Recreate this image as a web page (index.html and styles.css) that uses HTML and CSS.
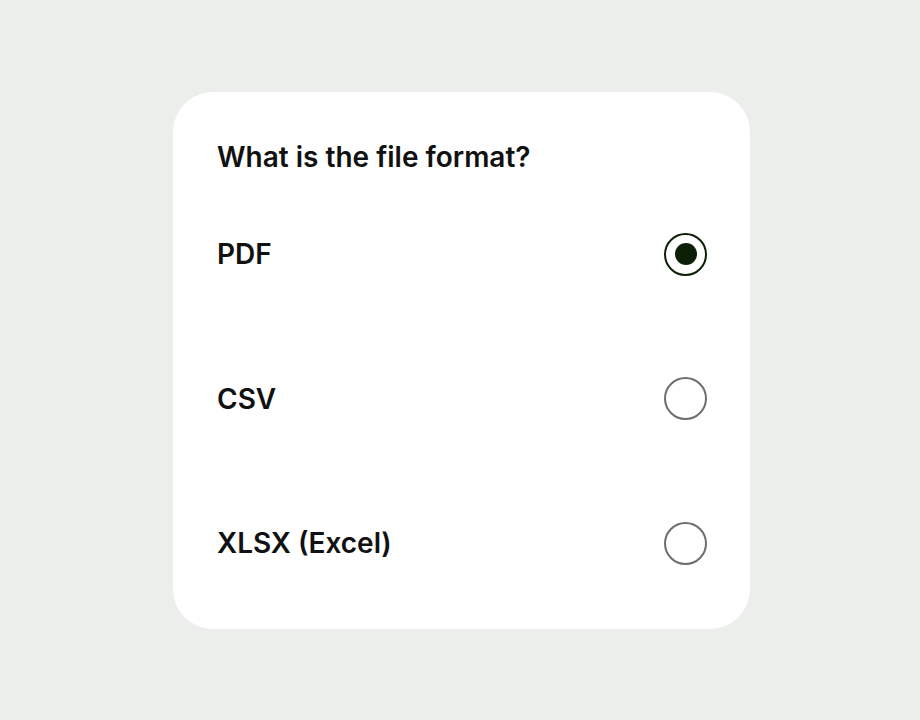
FILE: index.html
```html
<!DOCTYPE html>
<html>
   <head>
      <meta http-equiv="Content-Type" content="text/html;charset=utf-8" />
      <link rel="stylesheet" href="styles.css">
   </head>
   <body>
      <main class="cartao">
         <h1 class="pergunta">What is the file format?</h1>
         <ul class="opcoes">
            <li class="opcao">
               <span class="rotulo">PDF</span>
               <span class="radio marcado"></span>
            </li>
            <li class="opcao">
               <span class="rotulo">CSV</span>
               <span class="radio"></span>
            </li>
            <li class="opcao">
               <span class="rotulo">XLSX (Excel)</span>
               <span class="radio"></span>
            </li>
         </ul>
      </main>
   </body>
</html>
```

FILE: styles.css
```css
html, body {margin: 0; height: 100%;}
body {
   background: #eceeec;
   font-family: Inter, "Noto Sans", sans-serif;
   color: #111111;
   display: flex;
   align-items: center;
   justify-content: center;
   padding-left: 3px;
   box-sizing: border-box;
}
.cartao {
   width: 577px;
   height: 537px;
   box-sizing: border-box;
   background: #ffffff;
   border-radius: 40px;
   padding: 44px 43px 0 44px;
}
.pergunta {
   margin: 0;
   font-size: 28px;
   font-weight: 600;
   line-height: 42px;
}
.opcoes {
   list-style: none;
   margin: 55px 0 0 0;
   padding: 0;
   display: flex;
   flex-direction: column;
   gap: 101.5px;
}
.opcao {
   display: flex;
   align-items: center;
   justify-content: space-between;
   height: 43px;
}
.rotulo {
   font-size: 28px;
   font-weight: 600;
}
.radio {
   width: 43px;
   height: 43px;
   box-sizing: border-box;
   border: 2px solid #6e6e6e;
   border-radius: 50%;
   display: flex;
   align-items: center;
   justify-content: center;
}
.radio.marcado {border-color: #0e1f08;}
.radio.marcado::after {
   content: "";
   width: 22px;
   height: 22px;
   border-radius: 50%;
   background: #0e1f08;
}
```
